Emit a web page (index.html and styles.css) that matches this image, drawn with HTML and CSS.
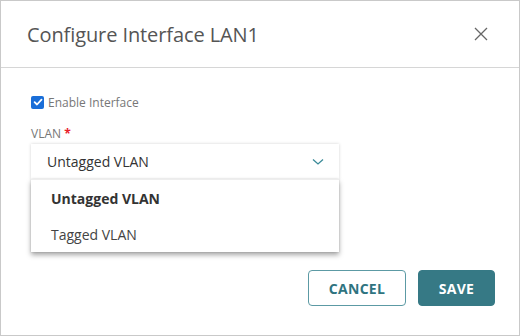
FILE: index.html
```html
<!DOCTYPE html>
<html>
<head>
<meta charset="utf-8">
<link rel="stylesheet" href="styles.css">
</head>
<body>
<div class="dialog">
  <div class="header">
    <h1 class="title">Configure Interface LAN1</h1>
    <svg class="close" width="14" height="14" viewBox="0 0 14 14"><path d="M1 1L13 13M13 1L1 13" stroke="#666" stroke-width="1.3" fill="none"/></svg>
  </div>
  <div class="body">
    <label class="check">
      <span class="box"><svg width="12" height="12" viewBox="0 0 12 12"><path d="M2.6 6.2L5 8.5L9.5 3.6" stroke="#fff" stroke-width="1.8" fill="none" stroke-linecap="round" stroke-linejoin="round"/></svg></span>
      <span class="check-label">Enable Interface</span>
    </label>
    <div class="field-label">VLAN <span class="req">*</span></div>
    <div class="select-wrap">
      <div class="select">
        <span>Untagged VLAN</span>
        <svg class="chev" width="12" height="8" viewBox="0 0 12 8"><path d="M1 1.5L6 6L11 1.5" stroke="#3a8a98" stroke-width="1.3" fill="none"/></svg>
      </div>
      <div class="menu">
        <div class="opt sel">Untagged VLAN</div>
        <div class="opt">Tagged VLAN</div>
      </div>
    </div>
  </div>
  <div class="footer">
    <button class="btn outline">CANCEL</button>
    <button class="btn primary">SAVE</button>
  </div>
</div>
</body>
</html>
```
FILE: styles.css
```css
html, body { margin: 0; padding: 0; background: #fff; }
body { font-family: "Open Sans", "Noto Sans", sans-serif; }
.dialog {
  width: 520px; height: 336px; box-sizing: border-box;
  border: 1px solid #c9c9c9;
  display: flex; flex-direction: column;
  background: #fff;
}
.header {
  height: 67px; box-sizing: border-box;
  border-bottom: 1px solid #d6d6d6;
  display: flex; align-items: center; justify-content: space-between;
  padding: 0 31px 0 26px;
}
.title { margin: 0; font-weight: 400; font-size: 20px; color: #555; letter-spacing: -0.1px; }
.close { display: block; }
.body { padding: 27px 0 0 30px; flex: 1; }
.check { display: flex; align-items: center; gap: 4px; height: 14px; }
.box {
  width: 13px; height: 13px; border-radius: 2px; background: #1a6ed8;
  display: flex; align-items: center; justify-content: center;
}
.check-label { font-size: 12px; color: #777; }
.field-label { margin-top: 17px; font-size: 12px; color: #777; line-height: 16px; }
.req { color: #e8202a; font-weight: 700; }
.select-wrap { position: relative; margin-top: 2px; width: 308px; }
.select {
  height: 35px; box-sizing: border-box;
  display: flex; align-items: center; justify-content: space-between;
  padding: 0 15px 0 16px;
  font-size: 14px; color: #333;
  background: #fff;
  box-shadow: 0 0 3px rgba(0,0,0,0.18);
}
.chev { display: block; }
.menu {
  position: absolute; left: 0; right: 0; top: 35px;
  background: #fff;
  border-top: 1px solid #eee;
  box-shadow: 0 3px 5px rgba(0,0,0,0.35), 0 0 2px rgba(0,0,0,0.15);
  padding: 0;
}
.opt { height: 36px; display: flex; align-items: center; padding-left: 20px; font-size: 14px; color: #444; }
.opt.sel { font-weight: 700; color: #333; }
.footer { display: flex; justify-content: flex-end; gap: 12px; padding: 0 24px 29px 0; }
.btn {
  height: 36px; box-sizing: border-box; border-radius: 4px;
  font-family: "Open Sans", sans-serif; font-weight: 700; font-size: 14px;
  letter-spacing: 0.3px;
}
.outline { width: 98px; border: 1px solid #5c9aa4; background: #fff; color: #2f7480; }
.primary { width: 77px; border: 1px solid #367985; background: #367985; color: #fff; }
```
